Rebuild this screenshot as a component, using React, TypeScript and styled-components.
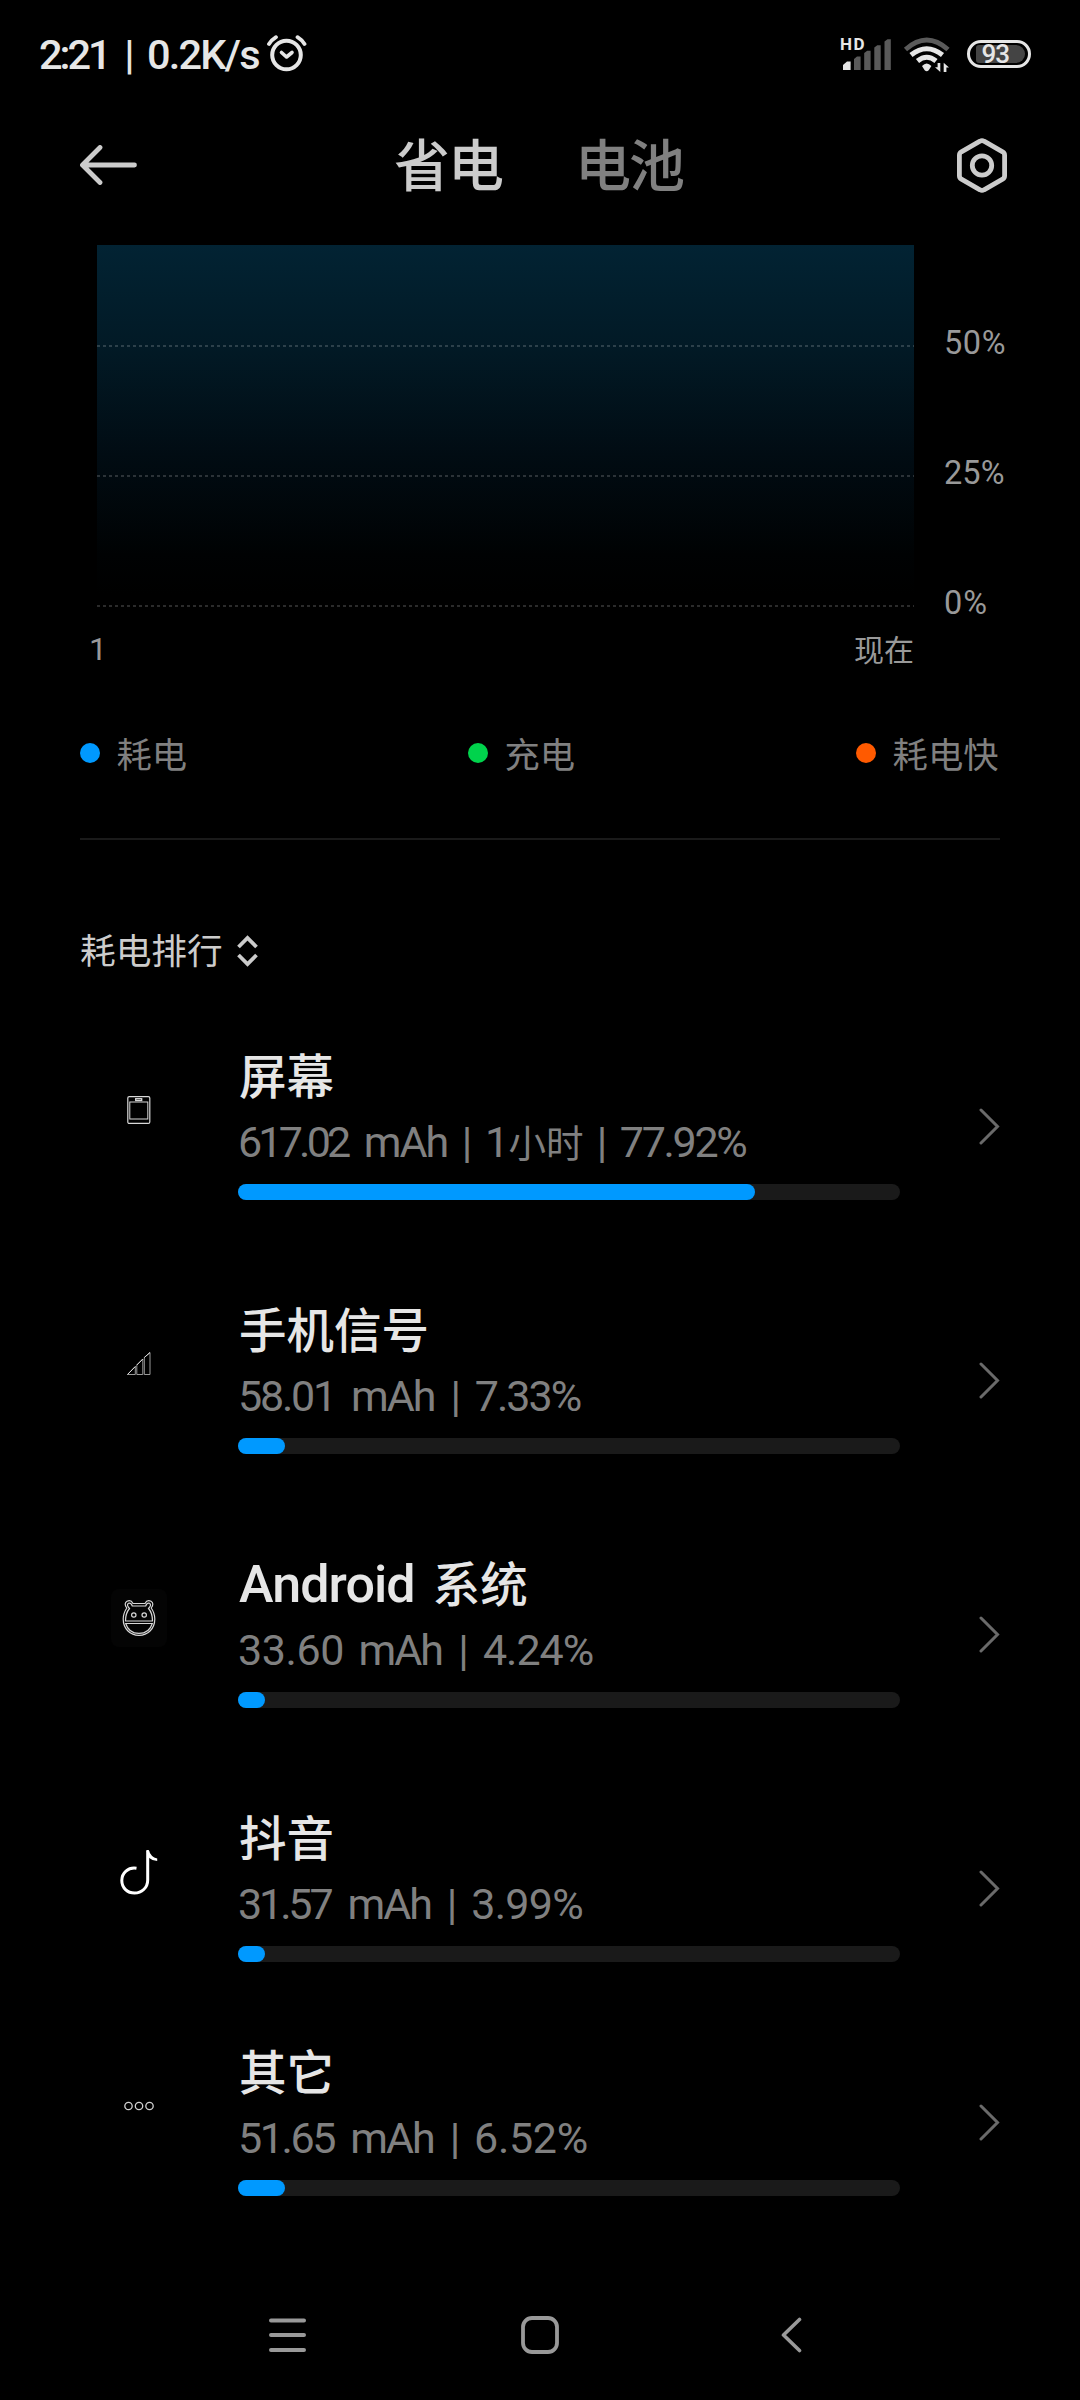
import React from "react";
import styled, { createGlobalStyle } from "styled-components";

const Global = createGlobalStyle`
  body { margin: 0; background: #000; }
  * { box-sizing: border-box; }
`;

const latin = `Roboto, "Noto Sans CJK SC", sans-serif`;
const han = `"Noto Sans CJK SC", "Noto Sans", sans-serif`;

const Screen = styled.div`
  width: 1080px;
  height: 2400px;
  background: #000;
  color: #e6e6e6;
  font-family: ${latin};
  display: flex;
  flex-direction: column;
  overflow: hidden;
`;

const T = styled.span<{ $s: number; $sp?: number; $ws?: number; $w?: number; $c?: string; $han?: boolean; $l?: number }>`
  font-size: ${(p) => p.$s}px;
  letter-spacing: ${(p) => p.$sp || 0}px;
  margin-right: ${(p) => -(p.$sp || 0)}px;
  word-spacing: ${(p) => p.$ws || 0}px;
  font-weight: ${(p) => p.$w || 400};
  color: ${(p) => p.$c || "inherit"};
  font-family: ${(p) => (p.$han ? han : latin)};
  line-height: ${(p) => p.$l || 40}px;
  white-space: pre;
`;

const HanRun = styled.span<{ $s: number }>`
  font-family: ${han};
  font-size: ${(p) => p.$s}px;
  letter-spacing: 0;
  line-height: 1;
`;

const StatusBar = styled.header`
  height: 108px;
  padding: 0 49px 0 39px;
  display: flex;
  justify-content: space-between;
`;

const StatusGroup = styled.div`
  display: flex;
  align-items: center;
`;

const Clock = styled.div`
  width: 228px;
  display: flex;
  gap: 12.5px;
  padding-top: 2px;
`;

const Header = styled.nav`
  height: 137px;
  padding: 0 73px 0 80px;
  display: grid;
  grid-template-columns: 57px 1fr 50px;
  align-items: start;
`;

const IconSlot = styled.div`
  height: 114px;
  display: flex;
  align-items: center;
`;

const Tabs = styled.div`
  display: flex;
  gap: 71px;
  padding-left: 257px;
  padding-top: 14px;
`;

const ChartArea = styled.section`
  height: 362px;
  display: flex;
  padding-left: 97px;
`;

const Plot = styled.div`
  width: 817px;
  height: 362px;
  background: linear-gradient(#022333 0, #021a26 100px, #010c13 210px, #000203 310px, #000 350px);
  display: flex;
  flex-direction: column;
  justify-content: flex-end;
  gap: 128px;
`;

const GridLine = styled.div`
  height: 2px;
  background: repeating-linear-gradient(90deg, rgba(255, 255, 255, 0.17) 0 3px, transparent 3px 6px);
`;

const Scale = styled.div`
  padding: 78px 0 0 30px;
  display: flex;
  flex-direction: column;
  gap: 90px;
  color: #999;
`;

const TimeAxis = styled.div`
  height: 136px;
  padding: 22px 166px 0 89px;
  display: flex;
  justify-content: space-between;
  color: #999;
`;

const Now = styled.div`
  display: flex;
  margin-top: -1px;
`;

const Legend = styled.div`
  height: 97px;
  margin: 0 80px;
  padding-right: 1.5px;
  border-bottom: 2px solid #1a1a1a;
  display: flex;
  justify-content: space-between;
  align-items: flex-start;
`;

const LegendItem = styled.div`
  height: 20px;
  display: flex;
  align-items: center;
  gap: 16.5px;
  color: #808080;
`;

const Dot = styled.i<{ $c: string }>`
  width: 20px;
  height: 20px;
  border-radius: 50%;
  background: ${(p) => p.$c};
`;

const SortButton = styled.div`
  height: 180px;
  padding: 89px 0 0 80px;
  display: flex;
  align-items: flex-start;
  gap: 14.5px;
  color: #ccc;
`;

const Row = styled.article<{ $h: number }>`
  height: ${(p) => p.$h}px;
  padding: 0 80px 0 111px;
  display: grid;
  grid-template-columns: 127px 662px 1fr;
  align-items: start;
`;

const AppIcon = styled.div<{ $tile?: boolean }>`
  width: 56px;
  height: 58px;
  margin-top: 61px;
  border-radius: 8px;
  background: ${(p) => (p.$tile ? "#040404" : "transparent")};
  display: flex;
  align-items: center;
  justify-content: center;
`;

const Info = styled.div`
  height: 180px;
  display: flex;
  flex-direction: column;
`;

const Title = styled.h2`
  margin: 25px 0 0 1px;
  height: 64px;
  display: flex;
`;

const Detail = styled.div<{ $gap: number }>`
  height: 75px;
  padding-top: 3px;
  color: #808080;
  display: flex;
  align-items: baseline;
  gap: ${(p) => p.$gap}px;
`;

const Track = styled.div`
  height: 16px;
  border-radius: 8px;
  background: #1a1a1a;
`;

const Fill = styled.div`
  height: 16px;
  border-radius: 8px;
  background: #0099ff;
`;

const Arrow = styled.div`
  margin-top: 88px;
  display: flex;
  justify-content: flex-end;
`;

const SystemNav = styled.footer`
  margin-top: auto;
  height: 130px;
  padding: 0 278px 0 269px;
  display: flex;
  justify-content: space-between;
  align-items: center;
`;

const HomeIcon = styled.svg`
  margin-right: 8px;
`;

const SignalIcon = styled.svg`
  margin-right: 11px;
`;

const Signal = () => (
  <SignalIcon width="52" height="40" viewBox="840 34 52 40">
    <text x="840" y="50" fontSize="17" fontWeight="700" fill="#e6e6e6" fontFamily="Roboto" textLength="24.500">HD</text>
    <path d="M843 70v-5l4-3.500h3.600V70z" fill="#e6e6e6" />
    <path d="M854 70V59l3-2.500h3.600V70zM864.200 70V53l3-2.300h3.400V70zM874.300 70V47.500l3-2.300h3.400V70zM884.500 70V41.500l3-2.300h3.300V70z" fill="#5a5a5a" />
  </SignalIcon>
);

const WifiIcon = () => (
  <svg width="48" height="40" viewBox="903 34 48 40" fill="none">
    <path d="M905.500 49.500Q926.700 30.500 948 49.500" stroke="#5a5a5a" strokeWidth="4.800" />
    <path d="M911 55Q926.700 42.500 942.500 55M917.500 61Q926.700 53.500 936 61" stroke="#e6e6e6" strokeWidth="5" />
    <path d="M922 66q4.700-5 9.400 0l-2.700 4.300q-2 1.700-4 0z" fill="#e6e6e6" />
    <path d="M940.300 63v9l-5.300-4.800h2.600V63zM943.700 72v-9.200l5.300 4.700h-2.600V72z" fill="#e6e6e6" />
  </svg>
);

const Battery = styled.div`
  width: 64px;
  height: 28px;
  margin-left: 16px;
  border: 3px solid #e6e6e6;
  border-radius: 14px;
  padding: 2px 3px 2px 6px;
  display: flex;
`;

const BatteryLevel = styled.div`
  width: 49px;
  height: 18px;
  border-radius: 3px 9px 9px 3px;
  background: #444;
  padding-left: 5.5px;
  display: flex;
  align-items: center;
`;

const AlarmIcon = () => (
  <svg width="40" height="38" viewBox="267 35.500 40 38" fill="none" stroke="#e6e6e6" strokeLinecap="round" strokeLinejoin="round">
    <circle cx="286.500" cy="55.500" r="14.300" strokeWidth="4" />
    <path d="M281.500 53l5 4.500 5.500-4.500" strokeWidth="3.600" />
    <path d="M269 44.500q2.500-4 7-6.800M304.500 44.500q-2.500-4-7-6.800" strokeWidth="3.800" />
  </svg>
);

const TabletIcon = () => (
  <svg width="24" height="28" viewBox="0 0 24 28" fill="none" stroke="#d8d8d8">
    <rect x="0.800" y="0.600" width="22" height="26.800" rx="1.500" strokeWidth="1.200" />
    <rect x="2.800" y="6" width="18" height="17" strokeWidth="1" />
    <rect x="8.700" y="2.700" width="6" height="1.800" strokeWidth="1.300" />
  </svg>
);

const BarsIcon = () => (
  <svg width="24" height="24" viewBox="0 0 24 24" fill="none" stroke="#999" strokeWidth="1">
    <path d="M0.500 22.500L8.300 14.500v8zM9.800 22.500V13l6-6v15.500zM17.300 22.500V5.500l5.700-5v22z" />
    <path d="M0.500 22.500L8.300 14.500M9.800 13l6-6M17.300 5.500l5.700-5" stroke="#ddd" />
  </svg>
);

const AndroidIcon = () => (
  <svg width="34" height="36" viewBox="0 0 34 36" fill="none" stroke="#d8d8d8" strokeWidth="1.200">
    <path d="M4.800 8Q1.500 3.500 5 1.300q4-1.800 6 2.200h12q2-4 6-2.200 3.500 2.200.2 6.700C32 12 32.800 15.500 32.800 19 32.800 28.500 26 35.400 17 35.400S1.200 28.500 1.200 19C1.200 15.500 2 12 4.800 8z" />
    <path d="M7.500 8.500Q4 5 6.500 3.300q2.500-.8 3.800 2.700h13.400q1.300-3.500 3.800-2.700 2.500 1.700-1 5.200Q30.500 13 30.500 21h-27Q3.500 13 7.500 8.500z" />
    <path d="M3.700 23.500h26.600C28.500 29.500 24 33.400 17 33.400S5.500 29.500 3.700 23.500z" />
    <circle cx="11.800" cy="15" r="2.200" />
    <circle cx="22.200" cy="15" r="2.200" />
  </svg>
);

const DouyinIcon = () => (
  <svg width="38" height="45" viewBox="0 0 38 45" fill="none">
    <path d="M16.500 18.300C8 17 1.800 23 1.800 30.500 1.800 38 7.500 43 14.500 43s13.200-5 13.200-13V1" stroke="#fff" strokeWidth="3" />
    <path d="M26.200 0h2.500q2 7 8.500 8.500V11q-5-.2-8-3z" fill="#fff" />
  </svg>
);

const DotsIcon = () => (
  <svg width="30" height="10" viewBox="0 0 30 10" fill="none" stroke="#d0d0d0" strokeWidth="1.300">
    <circle cx="4.500" cy="5" r="3.700" />
    <circle cx="15" cy="5" r="3.700" />
    <circle cx="25.500" cy="5" r="3.700" />
  </svg>
);

const Mixed = ({ text, size }: { text: string; size: number }) => (
  <>
    {text.split(/([\u4e00-\u9fff]+)/).map((part, i) =>
      i % 2 ? <HanRun key={i} $s={size}>{part}</HanRun> : part
    )}
  </>
);

/* Each detail word carries its own tracking. */
type Word = [string, number];
const mAh: Word = ["mAh", -2];
const bar: Word = ["|", 0];

const items: { name: string; words: Word[]; gap: number; fill: number; h: number; icon: React.ReactNode; tile?: boolean }[] = [
  { name: "屏幕", words: [["617.02", -3.8], mAh, bar, ["1小时", -0.5], bar, ["77.92%", -2.3]], gap: 12.6, fill: 517, h: 254, icon: <TabletIcon /> },
  { name: "手机信号", words: [["58.01", -2.2], mAh, bar, ["7.33%", -2]], gap: 13.9, fill: 47, h: 254, icon: <BarsIcon /> },
  { name: "Android 系统", words: [["33.60", -0.4], mAh, bar, ["4.24%", -1]], gap: 14.2, fill: 27, h: 254, icon: <AndroidIcon />, tile: true },
  { name: "抖音", words: [["31.57", -3.1], mAh, bar, ["3.99%", -0.7]], gap: 13.9, fill: 27, h: 234, icon: <DouyinIcon /> },
  { name: "其它", words: [["51.65", -2.4], mAh, bar, ["6.52%", -0.3]], gap: 13.9, fill: 47, h: 198, icon: <DotsIcon /> },
];

export default function App() {
  return (
    <Screen>
      <Global />
      <StatusBar>
        <StatusGroup>
          <Clock>
            <T $s={41.5} $w={500} $l={60} $sp={-3}>2:21</T>
            <T $s={41.5} $w={500} $l={60}>|</T>
            <T $s={41.5} $w={500} $l={60} $sp={-1.8}>0.2K/s</T>
          </Clock>
          <AlarmIcon />
        </StatusGroup>
        <StatusGroup>
          <Signal />
          <WifiIcon />
          <Battery>
            <BatteryLevel><T $s={26} $w={500} $l={18} $sp={-1}>93</T></BatteryLevel>
          </Battery>
        </StatusGroup>
      </StatusBar>
      <Header>
        <IconSlot>
          <svg width="57" height="40" viewBox="0 0 57 40" fill="none" stroke="#ccc" strokeWidth="4.800" strokeLinecap="round" strokeLinejoin="round">
            <path d="M20 2.500L2.500 20 20 37.500M3 20h51.500" />
          </svg>
        </IconSlot>
        <Tabs>
          <T $s={56} $w={500} $han $l={80} $sp={-2} $c="#ccc">省电</T>
          <T $s={56} $w={500} $han $l={80} $sp={-2} $c="#808080">电池</T>
        </Tabs>
        <IconSlot>
          <svg width="50" height="55" viewBox="0 0 50 55" fill="none" stroke="#ccc" strokeWidth="4.800" strokeLinejoin="round">
            <path d="M23 3.200q2-1.200 4 0l18.600 10.600q2 1.200 2 3.400v20.600q0 2.200-2 3.400L27 51.800q-2 1.200-4 0L4.400 41.200q-2-1.200-2-3.400V17.200q0-2.200 2-3.400z" />
            <circle cx="25" cy="27.500" r="9.700" />
          </svg>
        </IconSlot>
      </Header>
      <ChartArea>
        <Plot><GridLine /><GridLine /><GridLine /></Plot>
        <Scale>
          <T $s={32.5} $sp={0.6}>50%</T>
          <T $s={32.5} $sp={0.1}>25%</T>
          <T $s={32.5} $sp={1}>0%</T>
        </Scale>
      </ChartArea>
      <TimeAxis>
        <T $s={32}>1</T>
        <Now><T $s={30} $han>现在</T></Now>
      </TimeAxis>
      <Legend>
        <LegendItem><Dot $c="#0099ff" /><T $s={35.3} $han>耗电</T></LegendItem>
        <LegendItem><Dot $c="#00d34c" /><T $s={35.3} $han>充电</T></LegendItem>
        <LegendItem><Dot $c="#ff5a00" /><T $s={35.3} $han>耗电快</T></LegendItem>
      </Legend>
      <SortButton>
        <T $s={35.7} $han>耗电排行</T>
        <svg width="21" height="40" viewBox="0 0 21 40" fill="none" stroke="#ccc" strokeWidth="3.800">
          <path d="M1.500 18l9-9 9 9M1.500 26l9 9 9-9" />
        </svg>
      </SortButton>
      {items.map((it) => (
        <Row key={it.name} $h={it.h}>
          <AppIcon $tile={it.tile}>{it.icon}</AppIcon>
          <Info>
            <Title><T $s={52} $w={500} $l={64} $sp={-0.9} $ws={6}><Mixed text={it.name} size={47.5} /></T></Title>
            <Detail $gap={it.gap}>
              {it.words.map(([word, sp], i) => (
                <T key={i} $s={43} $l={60} $sp={sp}><Mixed text={word} size={37.5} /></T>
              ))}
            </Detail>
            <Track><Fill style={{ width: it.fill }} /></Track>
          </Info>
          <Arrow>
            <svg width="21" height="37" viewBox="0 0 21 37" fill="none" stroke="#6a6a6a" strokeWidth="3" strokeLinecap="round">
              <path d="M2 2l16.500 16.500L2 35" />
            </svg>
          </Arrow>
        </Row>
      ))}
      <SystemNav>
        <svg width="37" height="38" viewBox="0 0 37 38" stroke="#999" strokeWidth="4" strokeLinecap="round">
          <path d="M2 4.500h33M2 19h33M2 34h33" />
        </svg>
        <HomeIcon width="38" height="38" viewBox="0 0 38 38" fill="none" stroke="#999" strokeWidth="3.800">
          <rect x="2" y="2" width="34" height="34" rx="9" />
        </HomeIcon>
        <svg width="21" height="38" viewBox="0 0 21 38" fill="none" stroke="#999" strokeWidth="3.600" strokeLinecap="round" strokeLinejoin="round">
          <path d="M18.500 3.500L2.500 19l16 15.500" />
        </svg>
      </SystemNav>
    </Screen>
  );
}
